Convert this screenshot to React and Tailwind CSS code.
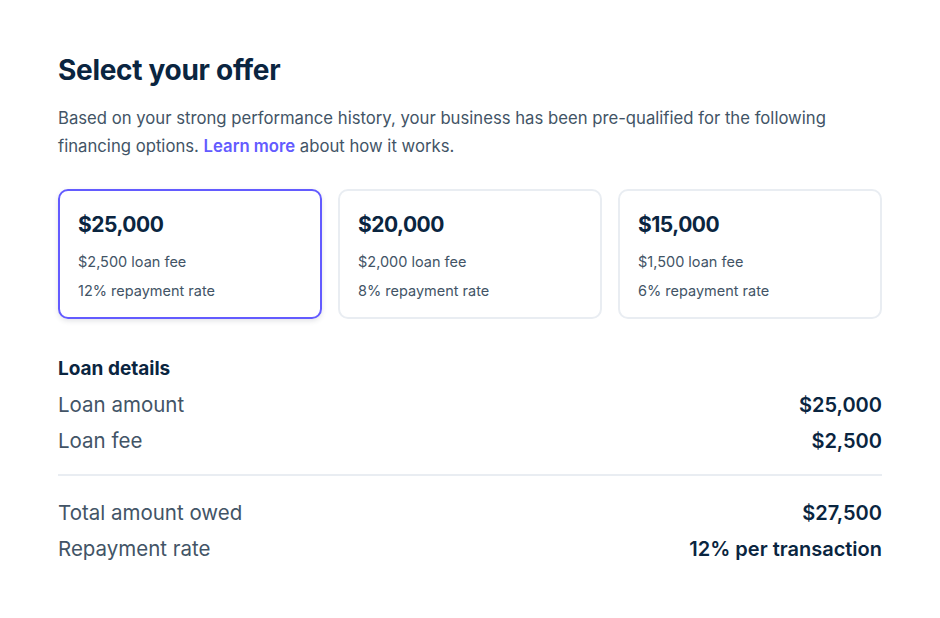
import React from 'react';

const offers = [
  { amount: '$25,000', fee: '$2,500 loan fee', rate: '12% repayment rate', selected: true },
  { amount: '$20,000', fee: '$2,000 loan fee', rate: '8% repayment rate' },
  { amount: '$15,000', fee: '$1,500 loan fee', rate: '6% repayment rate' },
];

const Row = ({ label, value }) => (
  <div className="flex items-center justify-between h-9">
    <span className="text-[20.5px] text-[#425466]">{label}</span>
    <span className="text-[20px] font-semibold text-[#0a2540]">{value}</span>
  </div>
);

const App = () => {
  return (
    <div
      className="min-h-screen bg-white px-[58px] pt-[50px]"
      style={{ fontFamily: 'Inter, "Noto Sans", sans-serif' }}
    >
      {/* Header */}
      <h1 className="text-[28px] font-bold leading-[40px] tracking-[-0.3px] text-[#0a2540]">
        Select your offer
      </h1>
      <p className="mt-[14px] text-[16.7px] leading-[28px] text-[#425466]">
        Based on your strong performance history, your business has been pre-qualified for the following
        financing options. <a href="#" className="font-semibold text-[#635bff]">Learn more</a> about how it works.
      </p>

      {/* Offer cards */}
      <div className="mt-[29px] grid grid-cols-3 gap-4">
        {offers.map((o) => (
          <div
            key={o.amount}
            className={
              o.selected
                ? 'h-[130px] rounded-[10px] border-2 border-[#635bff] px-[18px] pt-[19px] shadow-[0_2px_5px_rgba(60,66,87,0.15)]'
                : 'h-[130px] rounded-[10px] border-2 border-[#e9edf2] px-[18px] pt-[19px]'
            }
          >
            <div className="text-[21px] font-bold leading-[30px] tracking-[-0.5px] text-[#0a2540]">{o.amount}</div>
            <div className="mt-[11px] text-[14.5px] leading-[22px] text-[#425466]">{o.fee}</div>
            <div className="mt-[7px] text-[14.5px] leading-[22px] text-[#425466]">{o.rate}</div>
          </div>
        ))}
      </div>

      {/* Loan details */}
      <div className="mt-[32px]">
        <h2 className="text-[19px] font-bold leading-[36px] text-[#0a2540]">Loan details</h2>
        <Row label="Loan amount" value="$25,000" />
        <Row label="Loan fee" value="$2,500" />
        <div className="mt-[15px] mb-[19px] h-[2px] bg-[#e9edf2]" />
        <Row label="Total amount owed" value="$27,500" />
        <Row label="Repayment rate" value="12% per transaction" />
      </div>
    </div>
  );
};

export default App;
